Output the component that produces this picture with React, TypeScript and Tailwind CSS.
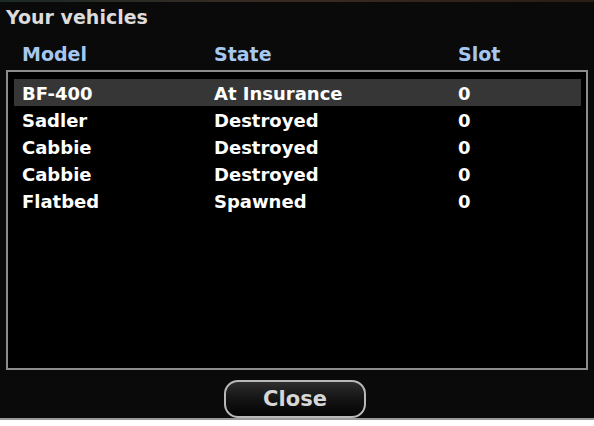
const vehicles = [
  { model: "BF-400", state: "At Insurance", slot: 0 },
  { model: "Sadler", state: "Destroyed", slot: 0 },
  { model: "Cabbie", state: "Destroyed", slot: 0 },
  { model: "Cabbie", state: "Destroyed", slot: 0 },
  { model: "Flatbed", state: "Spawned", slot: 0 },
];

export default function App() {
  return (
    <div className="w-[594px] h-[426px] bg-white overflow-hidden" style={{ fontFamily: '"DejaVu Sans", Verdana, sans-serif' }}>
      <div className="h-[420px] bg-[#0a0a0a] border-b-2 border-[#9a9a9a] flex flex-col">
        {/* strip of the game scene behind the window */}
        <div className="h-[2px] bg-gradient-to-r from-[#1c2a26] via-[#3a2a22] to-[#2a1d14]" />
        <h1 className="pl-[6px] pt-[4px] h-[32px] text-[19px] font-bold text-[#dcdcdc] leading-[22px]">Your vehicles</h1>
        <div className="grid grid-cols-[192px_244px_1fr] pl-[22px] h-[36px] text-[19px] font-bold text-[#a6c8f0] leading-[22px] pt-[9px]">
          <span>Model</span>
          <span>State</span>
          <span>Slot</span>
        </div>
        <div className="ml-[6px] w-[582px] h-[300px] border-2 border-[#8c8c8c] bg-black pt-[7px] pl-[6px] pr-[5px]">
          {vehicles.map((v, i) => (
            <div
              key={i}
              className={`grid grid-cols-[192px_244px_1fr] pl-[8px] h-[27px] items-center text-[18px] font-bold text-white leading-none pt-[2px] ${i === 0 ? "bg-[#363636]" : ""}`}
            >
              <span>{v.model}</span>
              <span>{v.state}</span>
              <span>{v.slot}</span>
            </div>
          ))}
        </div>
        <div className="pt-[10px] pl-[224px]">
          <button className="w-[142px] h-[38px] rounded-[14px] border-2 border-[#b8b8b8] bg-gradient-to-b from-[#2e2e2e] via-[#141414] to-[#050505] text-[21px] font-bold text-[#d6d6d6] leading-none">
            Close
          </button>
        </div>
      </div>
    </div>
  );
}
